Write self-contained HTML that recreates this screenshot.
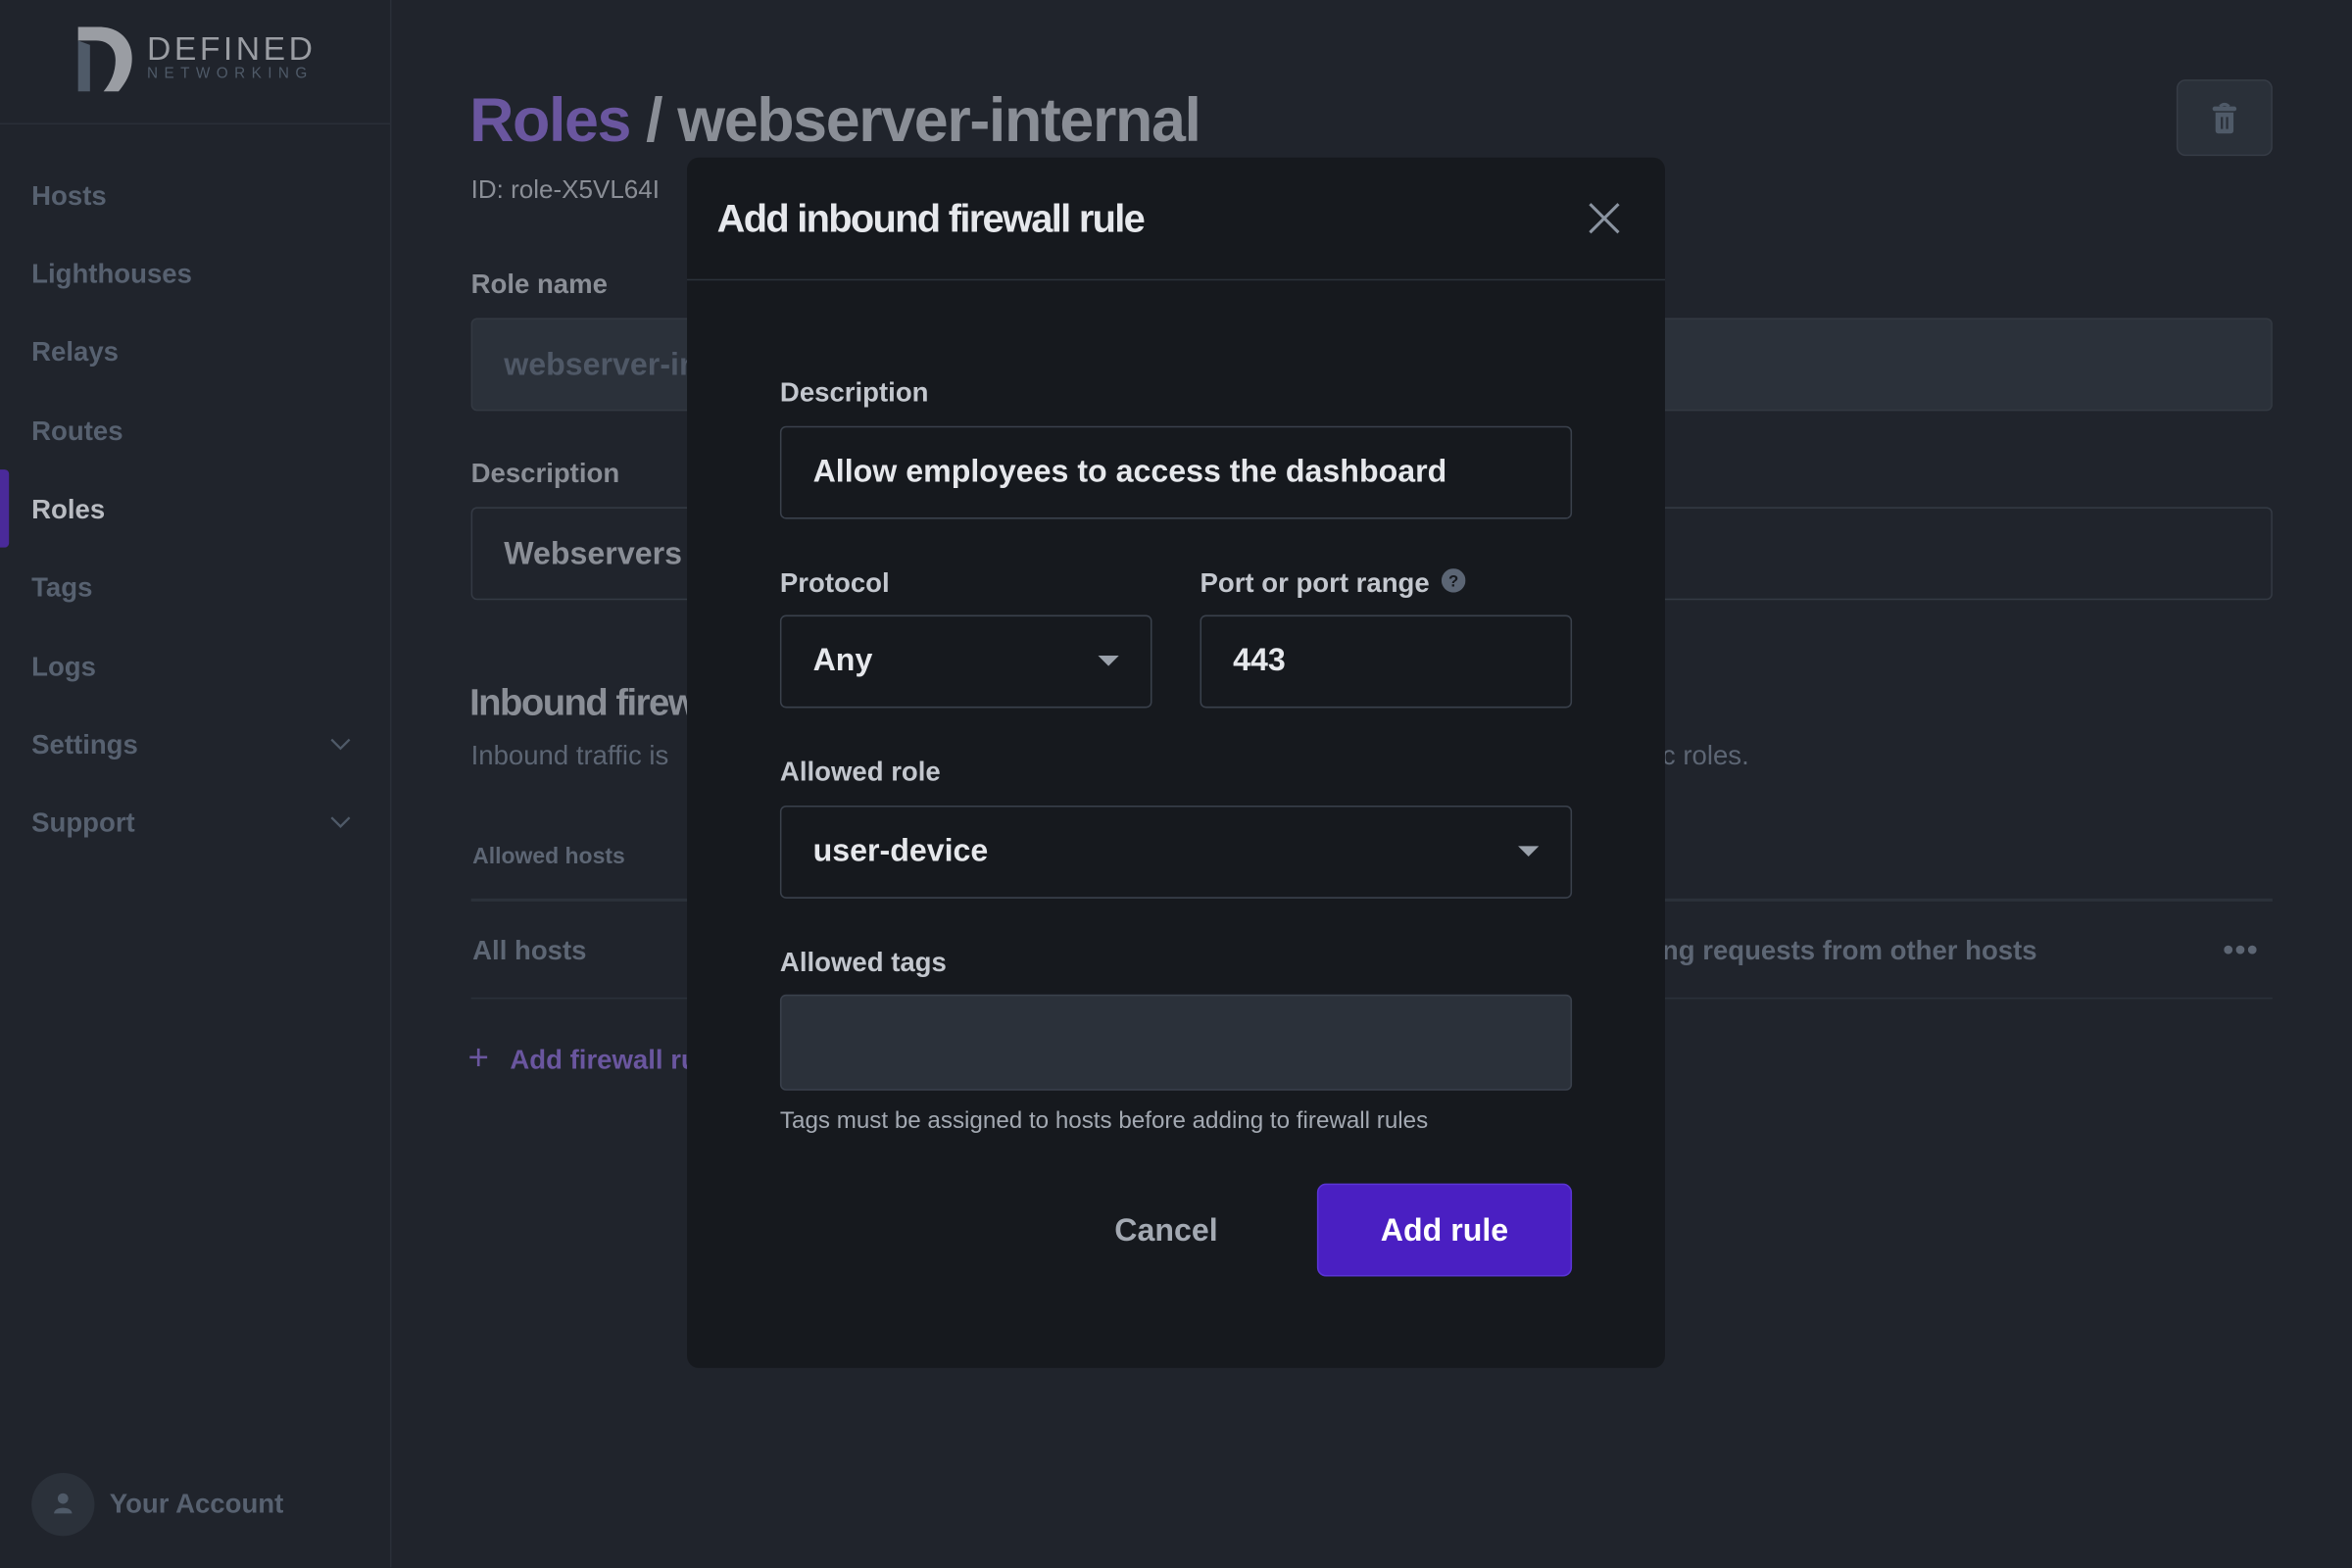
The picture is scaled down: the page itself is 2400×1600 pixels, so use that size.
<!DOCTYPE html>
<html><head><meta charset="utf-8"><style>
*{box-sizing:border-box;margin:0;padding:0}
html,body{width:2400px;height:1600px;overflow:hidden;background:#20242c}
#w{width:1568px;height:1045px;transform:scale(1.530612);transform-origin:0 0;position:relative;font-family:"Liberation Sans",sans-serif;background:#20242c}
.a{position:absolute;white-space:nowrap}
.nav{left:21px;font-size:18px;font-weight:bold;color:#576170;transform:translateY(-50%)}
.lbl{font-size:18px;font-weight:bold;transform:translateY(-50%)}
.box{position:absolute;border:1px solid #3a414c;border-radius:4px}
.tx{position:absolute;left:21px;top:50%;transform:translateY(-50%);font-size:21px;font-weight:bold;color:#e6e8ec}
</style></head><body><div id="w">
<div class="a" style="left:0;top:0;width:261px;height:1045px;border-right:1px solid #2a2f38"></div>
<div class="a" style="left:0;top:82px;width:261px;height:1px;background:#2a2f38"></div>
<svg class="a" style="left:52px;top:18px" width="38" height="43" viewBox="0 0 38 43"><path d="M0 0H14C28 0 36 9 36 21C36 30 32 37 27 43H17C22 37 25 30 25 22C25 14 20 9 12 9H0Z" fill="#9a9da3"/><path d="M0 9L8 12V43H0Z" fill="#4f5a68"/></svg>
<div class="a" style="left:98px;top:20px;font-size:22px;letter-spacing:2.3px;color:#9a9da3">DEFINED</div>
<div class="a" style="left:98px;top:44px;font-size:10px;letter-spacing:4.2px;color:#4f5a68">NETWORKING</div>
<div class="a nav" style="top:131px">Hosts</div>
<div class="a nav" style="top:183px">Lighthouses</div>
<div class="a nav" style="top:235px">Relays</div>
<div class="a nav" style="top:288px">Routes</div>
<div class="a" style="left:0;top:313px;width:6px;height:52px;background:#4a2a9a;border-radius:0 3px 3px 0"></div>
<div class="a nav" style="top:340px;color:#b9bcc2">Roles</div>
<div class="a nav" style="top:392px">Tags</div>
<div class="a nav" style="top:445px">Logs</div>
<div class="a nav" style="top:497px">Settings</div>
<div class="a nav" style="top:549px">Support</div>
<svg class="a" style="left:220px;top:491px" width="14" height="10"><path d="M1 2L7 8L13 2" stroke="#4f5a68" stroke-width="1.5" fill="none"/></svg>
<svg class="a" style="left:220px;top:543px" width="14" height="10"><path d="M1 2L7 8L13 2" stroke="#4f5a68" stroke-width="1.5" fill="none"/></svg>
<div class="a" style="left:21px;top:982px;width:42px;height:42px;border-radius:50%;background:#2b313a"></div>
<svg class="a" style="left:34px;top:994px" width="16" height="16"><circle cx="8" cy="5" r="3.5" fill="#4f5a68"/><path d="M2 15C2 10 14 10 14 15Z" fill="#4f5a68"/></svg>
<div class="a nav" style="left:73px;top:1003px">Your Account</div>
<div class="a" style="left:313px;top:57px;font-size:41px;font-weight:bold;letter-spacing:-0.9px;color:#8a8e96"><span style="color:#6a569f">Roles</span> / webserver-internal</div>
<div class="a lbl" style="left:314px;top:127px;color:#8a8e96;font-weight:normal;font-size:17px">ID: role-X5VL64I</div>
<div class="a" style="left:1451px;top:53px;width:64px;height:51px;border:1px solid #363c46;border-radius:6px;background:#2a3039"></div>
<svg class="a" style="left:1474px;top:68px" width="18" height="22" viewBox="0 0 18 22"><path d="M6 3Q9 0 12 3" stroke="#4f5a68" stroke-width="2" fill="none"/><rect x="1" y="3" width="16" height="3" rx="1.5" fill="#4f5a68"/><path d="M3 7H15V19Q15 21 13 21H5Q3 21 3 19Z" fill="#4f5a68"/><rect x="6.5" y="10" width="1.5" height="8" fill="#2a3039"/><rect x="10" y="10" width="1.5" height="8" fill="#2a3039"/></svg>
<div class="a lbl" style="left:314px;top:190px;color:#8a8e96">Role name</div>
<div class="a" style="left:314px;top:212px;width:1201px;height:62px;background:#2b313a;border:1px solid #333942;border-radius:4px"></div>
<div class="a" style="left:336px;top:244px;transform:translateY(-50%);font-size:21px;font-weight:bold;color:#4f5866">webserver-internal</div>
<div class="a lbl" style="left:314px;top:316px;color:#8a8e96">Description</div>
<div class="box" style="left:314px;top:338px;width:1201px;height:62px;border-color:#343a44"></div>
<div class="a" style="left:336px;top:370px;transform:translateY(-50%);font-size:21px;font-weight:bold;color:#8a8e96">Webservers</div>
<div class="a" style="left:313px;top:469px;transform:translateY(-50%);font-size:25px;font-weight:bold;letter-spacing:-1px;color:#8a8e96">Inbound firewall</div>
<div class="a lbl" style="left:314px;top:504px;font-weight:normal;color:#5d6674">Inbound traffic is</div>
<div class="a lbl" style="left:1108px;top:504px;font-weight:normal;color:#5d6674">c roles.</div>
<div class="a lbl" style="left:315px;top:571px;font-size:15px;color:#5d6674">Allowed hosts</div>
<div class="a" style="left:314px;top:599px;width:1201px;height:2px;background:#2b313a"></div>
<div class="a lbl" style="left:315px;top:634px;color:#5d6674">All hosts</div>
<div class="a lbl" style="left:1108px;top:634px;color:#5d6674">ng requests from other hosts</div>
<div class="a lbl" style="left:1482px;top:634px;color:#5d6674;font-size:20px;letter-spacing:1px">•••</div>
<div class="a" style="left:314px;top:665px;width:1201px;height:1px;background:#2b313a"></div>
<div class="a lbl" style="left:312px;top:706px;color:#6a569f;font-weight:normal;font-size:24px">+</div>
<div class="a lbl" style="left:340px;top:707px;color:#6a569f">Add firewall rule</div>
<div class="a" style="left:458px;top:105px;width:652px;height:807px;background:#16191e;border-radius:8px"></div>
<div class="a" style="left:478px;top:146px;transform:translateY(-50%);font-size:26px;font-weight:bold;letter-spacing:-1.1px;color:#e6e8ec">Add inbound firewall rule</div>
<svg class="a" style="left:1059px;top:135px" width="21" height="21"><path d="M1 1L20 20M20 1L1 20" stroke="#8a93a0" stroke-width="2"/></svg>
<div class="a" style="left:458px;top:186px;width:652px;height:1px;background:#2c323b"></div>
<div class="a lbl" style="left:520px;top:262px;color:#c3c7ce">Description</div>
<div class="box" style="left:520px;top:284px;width:528px;height:62px"><div class="tx">Allow employees to access the dashboard</div></div>
<div class="a lbl" style="left:520px;top:389px;color:#c3c7ce">Protocol</div>
<div class="box" style="left:520px;top:410px;width:248px;height:62px"><div class="tx">Any</div><svg style="position:absolute;left:211px;top:26px" width="14" height="8"><path d="M0 0H14L7 7Z" fill="#9aa1ab"/></svg></div>
<div class="a lbl" style="left:800px;top:389px;color:#c3c7ce">Port or port range</div>
<svg class="a" style="left:961px;top:379px" width="16" height="16"><circle cx="8" cy="8" r="8" fill="#5b6574"/><text x="8" y="12" font-size="11" font-weight="bold" text-anchor="middle" fill="#16191e" font-family="Liberation Sans">?</text></svg>
<div class="box" style="left:800px;top:410px;width:248px;height:62px"><div class="tx">443</div></div>
<div class="a lbl" style="left:520px;top:515px;color:#c3c7ce">Allowed role</div>
<div class="box" style="left:520px;top:537px;width:528px;height:62px"><div class="tx">user-device</div><svg style="position:absolute;left:491px;top:26px" width="14" height="8"><path d="M0 0H14L7 7Z" fill="#9aa1ab"/></svg></div>
<div class="a lbl" style="left:520px;top:642px;color:#c3c7ce">Allowed tags</div>
<div class="box" style="left:520px;top:663px;width:528px;height:64px;background:#2b313a"></div>
<div class="a lbl" style="left:520px;top:748px;font-size:15.8px;font-weight:normal;color:#a3a9b2">Tags must be assigned to hosts before adding to firewall rules</div>
<div class="a lbl" style="left:743px;top:821px;font-size:21px;color:#a3a9b2">Cancel</div>
<div class="a" style="left:878px;top:789px;width:170px;height:62px;background:#4a1fc2;border:1px solid #5a35d6;border-radius:6px;color:#fff;font-size:21px;font-weight:bold;text-align:center;line-height:61px">Add rule</div>
</div></body></html>
